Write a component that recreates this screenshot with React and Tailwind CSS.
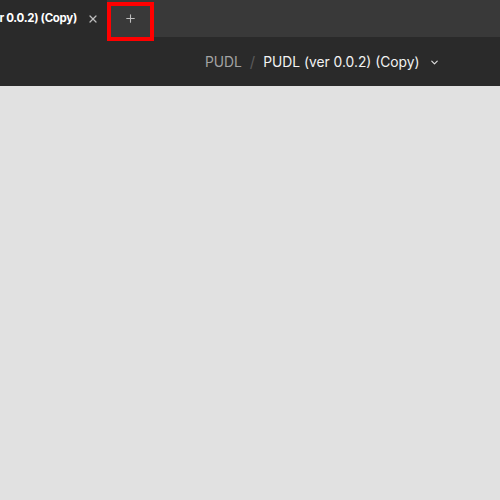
import { ChevronDown, Plus, X } from 'lucide-react';

export default function App() {
  return (
    <div
      className="w-[500px] h-[500px] bg-[#e1e1e1] flex flex-col overflow-hidden"
      style={{ fontFamily: 'Inter, "Noto Sans", sans-serif' }}
    >
      {/* Tab strip */}
      <div className="h-[37px] bg-[#393939] flex items-stretch shrink-0">
        <div className="w-[107px] flex items-center justify-end bg-[#2a2a2a] pr-[8px] overflow-hidden shrink-0">
          <span className="shrink-0 text-[11.5px] font-bold text-white whitespace-nowrap tracking-[-0.3px]">
            PUDL (ver 0.0.2) (Copy)
          </span>
          <X className="shrink-0 ml-[10px] w-[12px] h-[12px] text-[#bdbdbd]" strokeWidth={2.5} />
        </div>
        <div className="relative w-[47px] flex items-center justify-center">
          <Plus className="w-[13px] h-[13px] text-[#bfbfbf]" strokeWidth={2} />
          {/* highlight frame */}
          <div className="absolute left-0 top-[2px] w-[47px] h-[39px] border-[4px] border-[#ff0000] pointer-events-none" />
        </div>
      </div>

      {/* Toolbar */}
      <div className="h-[49px] bg-[#2a2a2a] flex items-center shrink-0 pl-[205px] pt-[2px]">
        <span className="text-[13.8px] text-[#a3a3a3]">PUDL</span>
        <span className="ml-[8px] text-[15px] text-[#5a5a5a]">/</span>
        <span className="ml-[8px] text-[13.8px] text-[#f2f2f2] whitespace-nowrap">PUDL (ver 0.0.2) (Copy)</span>
        <ChevronDown className="ml-[9px] w-[11px] h-[11px] text-[#e0e0e0]" strokeWidth={2.5} />
      </div>

      <div className="flex-1" />
    </div>
  );
}
